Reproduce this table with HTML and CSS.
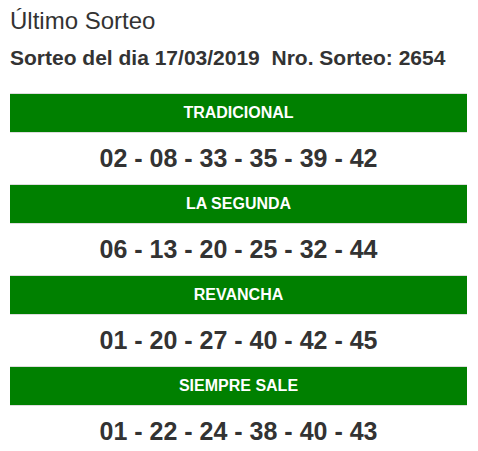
FILE: index.html
```html
<!DOCTYPE html>
<html lang="es">
<head>
<meta charset="utf-8">
<link rel="stylesheet" href="styles.css">
</head>
<body>
<div class="wrap">
  <h2 class="title">Último Sorteo</h2>
  <h4 class="sub">Sorteo del dia 17/03/2019 &nbsp;Nro. Sorteo: 2654</h4>
  <div class="results">
    <div class="cat">TRADICIONAL</div>
    <div class="nums">02 - 08 - 33 - 35 - 39 - 42</div>
    <div class="cat">LA SEGUNDA</div>
    <div class="nums">06 - 13 - 20 - 25 - 32 - 44</div>
    <div class="cat">REVANCHA</div>
    <div class="nums">01 - 20 - 27 - 40 - 42 - 45</div>
    <div class="cat">SIEMPRE SALE</div>
    <div class="nums">01 - 22 - 24 - 38 - 40 - 43</div>
  </div>
</div>
</body>
</html>
```

FILE: styles.css
```css
html, body {
  margin: 0;
  padding: 0;
  background: #fff;
}
body {
  font-family: "Liberation Sans", Arial, sans-serif;
  color: #333;
}
.wrap {
  padding: 0 11px 0 10px;
}
.title {
  margin: 0;
  padding-top: 8px;
  font-size: 24px;
  font-weight: normal;
  line-height: 26px;
}
.sub {
  margin: 0;
  padding-top: 12px;
  font-size: 21px;
  font-weight: bold;
  line-height: 24px;
}
.results {
  margin-top: 23px;
  display: flex;
  flex-direction: column;
}
.cat {
  border-top: 1px solid #ddd;
  background: #008000;
  color: #fff;
  font-weight: bold;
  font-size: 16px;
  line-height: 20px;
  padding: 9px 8px;
  text-align: center;
}
.nums {
  border-top: 1px solid #ddd;
  font-weight: bold;
  font-size: 25px;
  line-height: 35px;
  padding: 8px;
  text-align: center;
}
```
